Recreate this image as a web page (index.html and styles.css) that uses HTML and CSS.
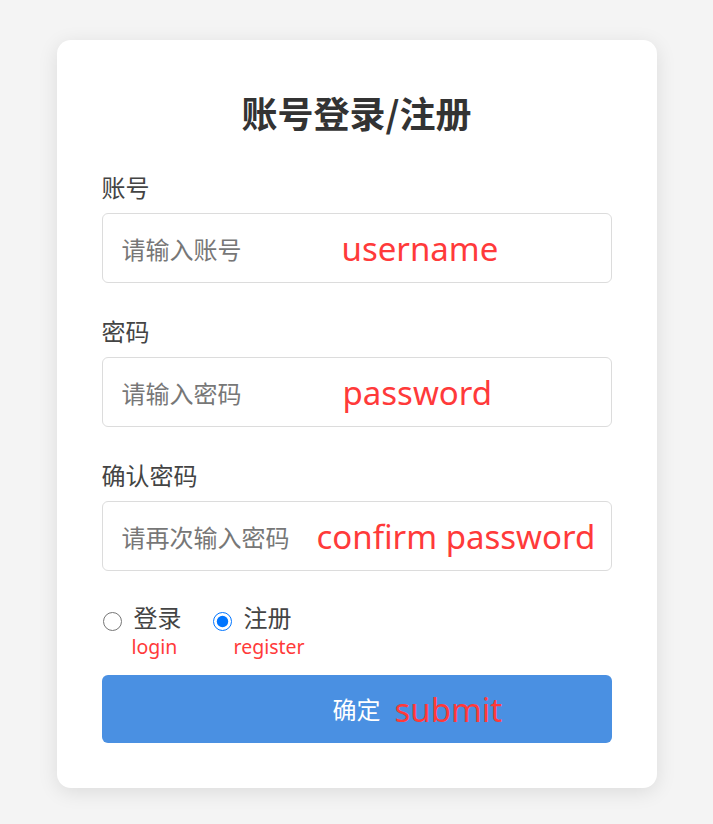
FILE: index.html
```html
<!DOCTYPE html>
<html lang="zh-CN">
<head>
<meta charset="utf-8">
<title>账号登录/注册</title>
<link rel="stylesheet" href="styles.css">
</head>
<body>
<main class="page">
  <form class="card">
    <h1 class="title">账号登录/注册</h1>

    <div class="field">
      <label class="label">账号</label>
      <div class="input-wrap">
        <input class="input" type="text" placeholder="请输入账号">
        <span class="note note-user">username</span>
      </div>
    </div>

    <div class="field">
      <label class="label">密码</label>
      <div class="input-wrap">
        <input class="input" type="password" placeholder="请输入密码">
        <span class="note note-pass">password</span>
      </div>
    </div>

    <div class="field">
      <label class="label">确认密码</label>
      <div class="input-wrap">
        <input class="input" type="password" placeholder="请再次输入密码">
        <span class="note note-confirm">confirm password</span>
      </div>
    </div>

    <div class="radios">
      <div class="radio-item">
        <label class="radio-label"><input class="radio" type="radio" name="mode"> 登录</label>
        <span class="sub-note sub-login">login</span>
      </div>
      <div class="radio-item">
        <label class="radio-label"><input class="radio" type="radio" name="mode" checked> 注册</label>
        <span class="sub-note sub-register">register</span>
      </div>
    </div>

    <button class="submit" type="button"><span class="submit-text">确定<span class="note note-submit">submit</span></span></button>
  </form>
</main>
</body>
</html>
```

FILE: styles.css
```css
* { box-sizing: border-box; }

html, body {
  margin: 0;
  padding: 0;
}

body {
  background: #f4f4f4;
  font-family: "Noto Sans", "Noto Sans CJK SC", sans-serif;
  color: #333;
  min-height: 824px;
}

.page {
  padding-top: 40px;
  display: flex;
  justify-content: center;
}

.card {
  width: 600px;
  background: #fff;
  border-radius: 14px;
  box-shadow: 0 4px 20px rgba(0, 0, 0, 0.1);
  padding: 45px 45px 45px;
  display: flex;
  flex-direction: column;
}

.title {
  margin: 0 0 30px;
  font-family: "Noto Sans CJK SC", sans-serif;
  font-size: 36px;
  line-height: 54px;
  font-weight: 700;
  text-align: center;
  color: #333;
}

.field {
  display: flex;
  flex-direction: column;
  margin-bottom: 30px;
}

.label {
  font-family: "Noto Sans CJK SC", sans-serif;
  font-size: 24px;
  line-height: 36px;
  color: #444;
  margin-bottom: 8px;
}

.input-wrap {
  position: relative;
}

.input {
  display: block;
  width: 100%;
  height: 70px;
  border: 1px solid #dcdcdc;
  border-radius: 6px;
  padding: 0 19px;
  font-family: "Noto Sans CJK SC", sans-serif;
  font-size: 24px;
  color: #333;
  outline: none;
  background: #fff;
}

.input::placeholder {
  color: #777;
}

.note {
  position: absolute;
  top: 50%;
  transform: translateY(-50%);
  font-family: "Noto Sans", sans-serif;
  font-size: 33px;
  line-height: 1;
  color: #ff3a3a;
  white-space: nowrap;
  pointer-events: none;
}

.note-user { left: 240px; }
.note-pass { left: 241px; }
.note-confirm { left: 215px; }

.radios {
  display: flex;
  gap: 30px;
  margin-top: 2px;
  margin-bottom: 16px;
}

.radio-item {
  display: flex;
  flex-direction: column;
}

.radio-label {
  display: flex;
  align-items: center;
  font-family: "Liberation Sans", "Noto Sans CJK SC", sans-serif;
  font-size: 24px;
  line-height: 32px;
  color: #444;
  gap: 12px;
}

.radio {
  width: 19px;
  height: 19px;
  margin: 4px 0 0 1px;
}

.sub-note {
  font-family: "Noto Sans", sans-serif;
  font-size: 19.5px;
  line-height: 24px;
  color: #ff3a3a;
}

.sub-login { padding-left: 30px; }
.sub-register { padding-left: 22px; }

.submit {
  height: 68px;
  border: none;
  border-radius: 6px;
  background: #4a90e2;
  color: #fff;
  font-family: "Noto Sans CJK SC", sans-serif;
  font-size: 24px;
  cursor: pointer;
  display: flex;
  align-items: center;
  justify-content: center;
}

.submit-text {
  position: relative;
  line-height: 36px;
}

.note-submit {
  left: calc(100% + 14px);
}
```
